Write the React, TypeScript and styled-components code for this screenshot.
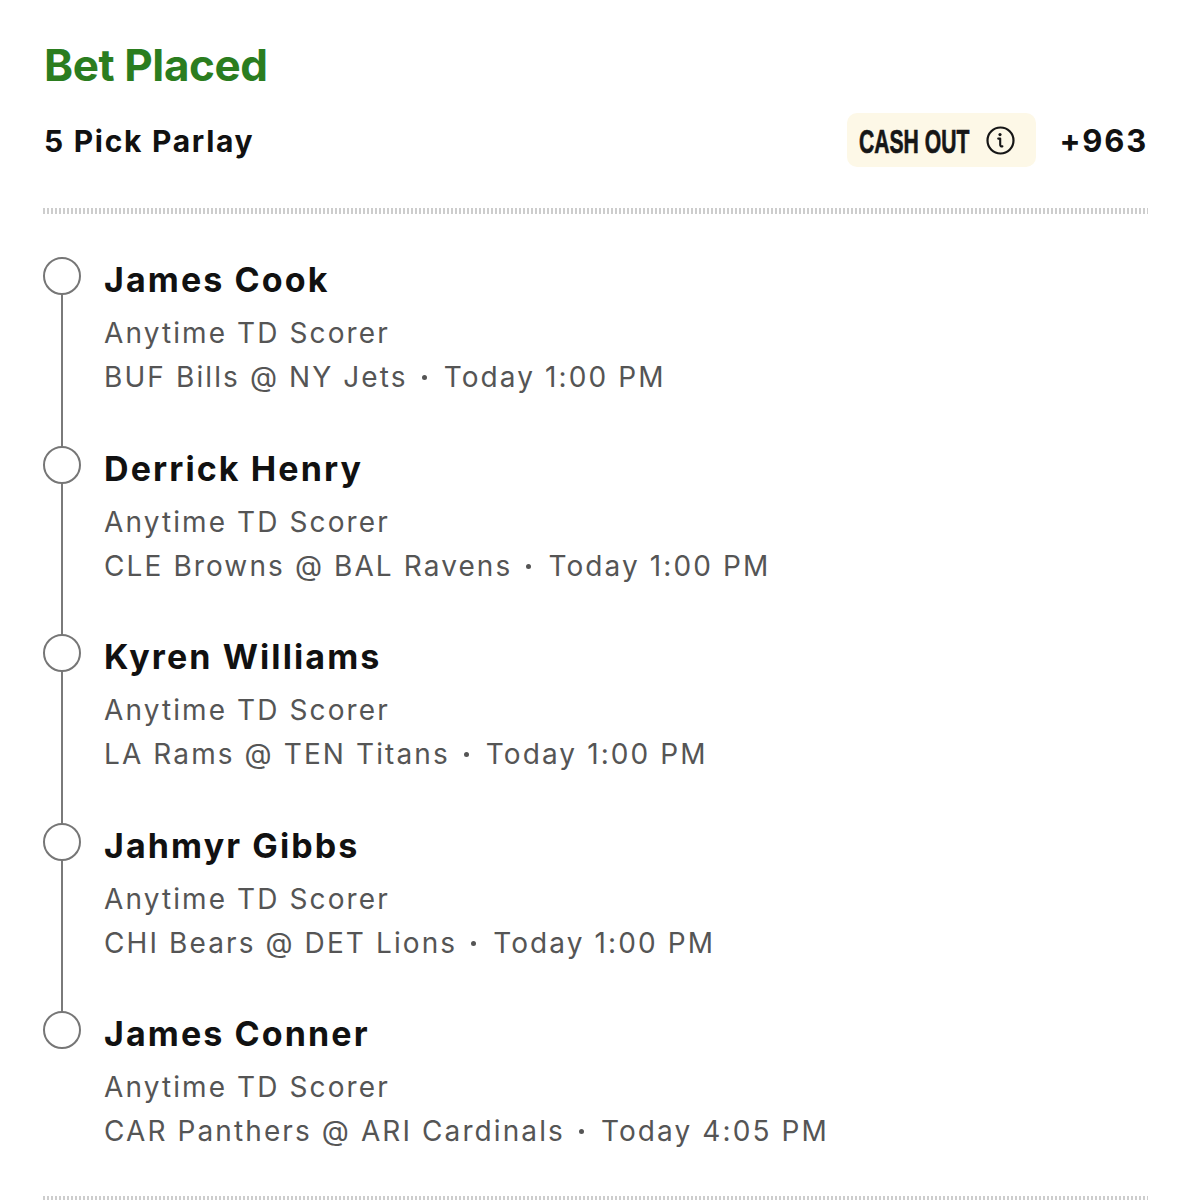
import styled, { createGlobalStyle } from 'styled-components';

type Leg = {
  player: string;
  market: string;
  game: string;
  time: string;
};

const legs: Leg[] = [
  { player: 'James Cook', market: 'Anytime TD Scorer', game: 'BUF Bills @ NY Jets', time: 'Today 1:00 PM' },
  { player: 'Derrick Henry', market: 'Anytime TD Scorer', game: 'CLE Browns @ BAL Ravens', time: 'Today 1:00 PM' },
  { player: 'Kyren Williams', market: 'Anytime TD Scorer', game: 'LA Rams @ TEN Titans', time: 'Today 1:00 PM' },
  { player: 'Jahmyr Gibbs', market: 'Anytime TD Scorer', game: 'CHI Bears @ DET Lions', time: 'Today 1:00 PM' },
  { player: 'James Conner', market: 'Anytime TD Scorer', game: 'CAR Panthers @ ARI Cardinals', time: 'Today 4:05 PM' },
];

const GlobalStyle = createGlobalStyle`
  body {
    margin: 0;
    background: #fff;
    font-family: Inter, "Liberation Sans", sans-serif;
  }
`;

const Page = styled.div`
  padding: 39px 43px 0 43px;
  overflow: hidden;
  height: 1200px;
  box-sizing: border-box;
`;

const Title = styled.h1`
  margin: 0;
  font-size: 44px;
  line-height: 52px;
  font-weight: 700;
  letter-spacing: -0.4px;
  color: #2b7d1f;
  padding-left: 1px;
`;

const SummaryRow = styled.div`
  display: flex;
  align-items: center;
  margin-top: 22px;
  height: 54px;
`;

const ParlayName = styled.div`
  flex: 1;
  font-size: 30px;
  line-height: 36px;
  font-weight: 700;
  letter-spacing: 1.7px;
  color: #111;
  padding-left: 1px;
  padding-top: 2px;
`;

const CashOut = styled.div`
  display: flex;
  align-items: center;
  gap: 17px;
  height: 54px;
  padding: 0 21px 0 12px;
  border-radius: 10px;
  background: #fdf8e7;
  box-sizing: border-box;
`;

const CashOutLabel = styled.span`
  display: inline-block;
  font-family: "Liberation Sans", Arial, sans-serif;
  font-size: 33px;
  font-weight: 700;
  line-height: 1;
  color: #161616;
  -webkit-text-stroke: 0.7px #161616;
  transform: scaleX(0.64);
  transform-origin: left center;
  margin-right: -62px;
  padding-top: 2px;
`;

const Odds = styled.div`
  margin-left: 23px;
  font-size: 31px;
  line-height: 36px;
  font-weight: 700;
  letter-spacing: 1.8px;
  color: #111;
  padding-top: 2px;
`;

const Divider = styled.div<{ $top: number }>`
  margin-top: ${(p) => p.$top}px;
  height: 6px;
  background: repeating-linear-gradient(to right, #cdcdcd 0 2px, transparent 2px 4px);
`;

const Legs = styled.div`
  margin-top: 43px;
`;

const LegRow = styled.div`
  display: flex;
  gap: 23px;
`;

const Track = styled.div`
  display: flex;
  flex-direction: column;
  align-items: center;
  width: 38px;
  flex-shrink: 0;
`;

const Node = styled.div`
  width: 38px;
  height: 38px;
  border: 2.5px solid #767676;
  border-radius: 50%;
  box-sizing: border-box;
`;

const Connector = styled.div<{ $hidden: boolean }>`
  flex: 1;
  width: 2.5px;
  background: ${(p) => (p.$hidden ? 'transparent' : '#7a7a7a')};
`;

const LegBody = styled.div<{ $last: boolean }>`
  padding-bottom: ${(p) => (p.$last ? 43 : 46.5)}px;
`;

const Player = styled.div`
  margin-top: 3px;
  font-size: 34px;
  line-height: 40px;
  font-weight: 700;
  letter-spacing: 2.1px;
  color: #111;
`;

const Detail = styled.div`
  font-size: 28px;
  line-height: 44px;
  letter-spacing: 2.1px;
  color: #555;
`;

const Market = styled(Detail)`
  margin-top: 11px;
`;

const Sep = styled.span`
  display: inline-block;
  width: 5px;
  height: 5px;
  margin: 0 17px 0 14px;
  border-radius: 50%;
  background: #555;
  vertical-align: 7px;
`;

const InfoIcon = () => (
  <svg width="29" height="29" viewBox="0 0 29 29" fill="none">
    <circle cx="14.5" cy="14.5" r="13" stroke="#161616" strokeWidth="2.2" />
    <circle cx="14" cy="8.6" r="1.6" fill="#161616" />
    <path
      d="M12.2 12.6 H14.2 V18.8 Q14.2 20.6 16.4 20.4"
      stroke="#161616"
      strokeWidth="2.1"
      strokeLinecap="round"
      strokeLinejoin="round"
    />
  </svg>
);

function App() {
  return (
    <Page>
      <GlobalStyle />
      <Title>Bet Placed</Title>
      <SummaryRow>
        <ParlayName>5 Pick Parlay</ParlayName>
        <CashOut>
          <CashOutLabel>CASH OUT</CashOutLabel>
          <InfoIcon />
        </CashOut>
        <Odds>+963</Odds>
      </SummaryRow>
      <Divider $top={41} />
      <Legs>
        {legs.map((leg, i) => {
          const last = i === legs.length - 1;
          return (
            <LegRow key={leg.player}>
              <Track>
                <Node />
                <Connector $hidden={last} />
              </Track>
              <LegBody $last={last}>
                <Player>{leg.player}</Player>
                <Market>{leg.market}</Market>
                <Detail>
                  {leg.game}
                  <Sep />
                  {leg.time}
                </Detail>
              </LegBody>
            </LegRow>
          );
        })}
      </Legs>
      <Divider $top={0} />
    </Page>
  );
}

export default App;
